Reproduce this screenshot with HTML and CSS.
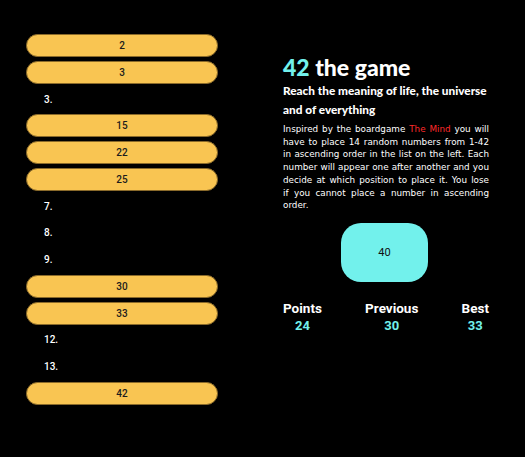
FILE: index.html
```html
<!DOCTYPE html>
<html>
<head>
<meta charset="utf-8">
<link rel="stylesheet" href="styles.css">
</head>
<body>
<div class="page">
  <ol class="list">
    <li class="tile">2</li>
    <li class="tile">3</li>
    <li class="slot">3.</li>
    <li class="tile">15</li>
    <li class="tile">22</li>
    <li class="tile">25</li>
    <li class="slot">7.</li>
    <li class="slot">8.</li>
    <li class="slot">9.</li>
    <li class="tile">30</li>
    <li class="tile">33</li>
    <li class="slot">12.</li>
    <li class="slot">13.</li>
    <li class="tile">42</li>
  </ol>
  <div class="info">
    <h1 class="title"><span class="accent">42</span> the game</h1>
    <h2 class="subtitle">Reach the meaning of life, the universe and of everything</h2>
    <p class="desc">Inspired by the boardgame <span class="red">The Mind</span> you will have to place 14 random numbers from 1-42 in ascending order in the list on the left. Each number will appear one after another and you decide at which position to place it. You lose if&nbsp;you cannot place a number in ascending order.</p>
    <div class="current-wrap"><div class="current">40</div></div>
    <div class="stats">
      <div class="stat"><div class="label">Points</div><div class="value">24</div></div>
      <div class="stat"><div class="label">Previous</div><div class="value">30</div></div>
      <div class="stat"><div class="label">Best</div><div class="value">33</div></div>
    </div>
  </div>
</div>
</body>
</html>
```
FILE: styles.css
```css
html, body {
  margin: 0;
  padding: 0;
  background: #000;
}
body {
  width: 525px;
  height: 457px;
  overflow: hidden;
  font-family: Roboto, "Liberation Sans", sans-serif;
  color: #fff;
}
.page {
  display: flex;
  align-items: flex-start;
  padding: 34px 0 0 26px;
  gap: 65px;
}
.list {
  list-style: none;
  margin: 0;
  padding: 0;
  width: 192px;
  display: flex;
  flex-direction: column;
  gap: 3.77px;
}
.list li {
  height: 23px;
  box-sizing: border-box;
  display: flex;
  align-items: center;
  font-size: 10px;
  font-weight: 500;
}
.tile {
  background: #f9c552;
  border: 1px solid #8a6a2a;
  border-radius: 12px;
  justify-content: center;
  color: #1c1c1c;
}
.slot {
  padding-left: 18px;
  color: #fff;
}
.info {
  width: 206px;
  padding-top: 20px;
}
.title {
  margin: 0;
  font-family: Lato, "Open Sans", sans-serif;
  font-weight: 900;
  font-size: 23px;
  line-height: 26px;
  color: #fff;
}
.accent { color: #72f1ec; }
.subtitle {
  margin: 1px 0 0;
  font-family: Lato, "Open Sans", sans-serif;
  font-weight: 900;
  font-size: 11.8px;
  line-height: 19px;
}
.desc {
  margin: 4px 0 0;
  font-family: "DejaVu Sans", sans-serif;
  font-size: 8.8px;
  line-height: 12.7px;
  text-align: justify;
}
.red { color: #ff2a2a; }
.current-wrap {
  display: flex;
  justify-content: center;
  margin-top: 11px;
}
.current {
  width: 87px;
  height: 59px;
  margin-left: -3px;
  background: #72f1ec;
  border-radius: 20px;
  display: flex;
  align-items: center;
  justify-content: center;
  color: #111;
  font-size: 11px;
}
.stats {
  display: flex;
  justify-content: space-between;
  margin-top: 18px;
}
.stat {
  display: flex;
  flex-direction: column;
  align-items: center;
}
.label {
  font-weight: 700;
  font-size: 13.5px;
  line-height: 16px;
}
.value {
  margin-top: 1px;
  font-weight: 700;
  font-size: 13px;
  line-height: 17px;
  color: #72f1ec;
}
```
